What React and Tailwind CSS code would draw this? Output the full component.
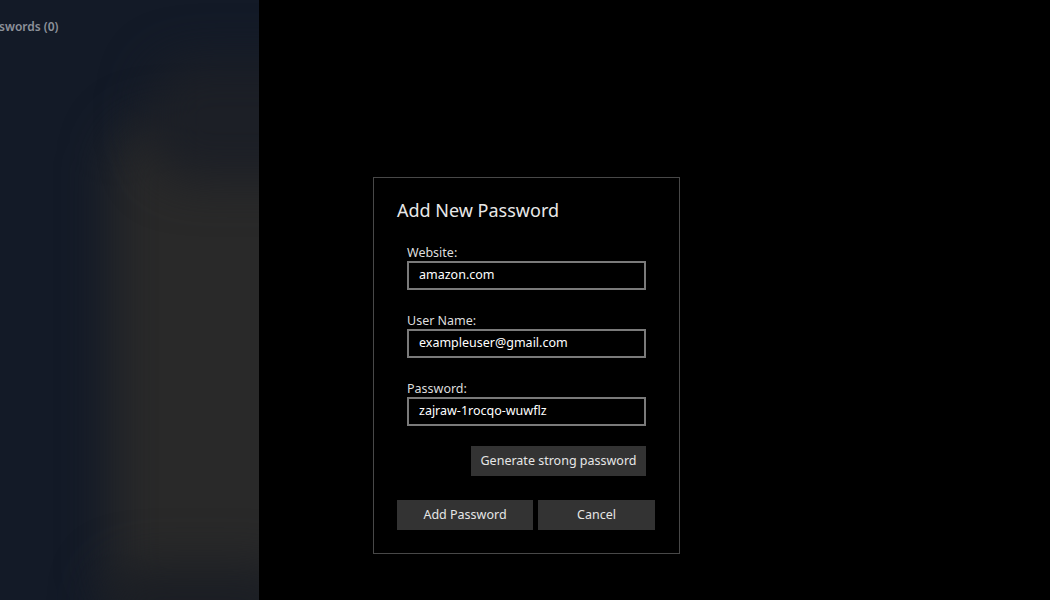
import React from "react";

const font = { fontFamily: '"Noto Sans", "Open Sans", sans-serif' };

function Field({ label, value }) {
  return (
    <div className="flex flex-col">
      <div className="h-[17px] text-[12.5px] leading-[17px] text-[#dedede]">{label}</div>
      <div className="h-[29px] w-[239px] border-2 border-[#7a7a7a] pl-[10px] flex items-center text-[12.5px] text-white">
        {value}
      </div>
    </div>
  );
}

export default function App() {
  return (
    <div className="relative w-[1050px] h-[600px] flex bg-black overflow-hidden" style={font}>
      <div className="relative w-[259px] h-full bg-[#131a27] overflow-hidden">
        <div className="absolute left-[110px] top-[120px] w-[260px] h-[500px] rounded-[50px] bg-[#292929] blur-xl" />
        <div className="absolute left-[150px] top-[60px] w-[200px] h-[120px] rounded-[40px] bg-[#1c1f26] blur-xl" />
        <div className="absolute left-[100px] top-[565px] w-[200px] h-[80px] rounded-[40px] bg-[#1b1e24] blur-xl" />
        <div className="relative pt-[18px] -ml-[1px] text-[12px] font-semibold text-[#8d919a]">swords (0)</div>
      </div>
      <div className="flex-1 h-full bg-black" />
      <div className="absolute inset-0 pl-[373px] pt-[177px]">
        <div className="w-[307px] h-[377px] border border-[#484848] bg-black pl-[23px] pt-[19px] flex flex-col">
          <div className="text-[18px] leading-[26px] text-[#e8e8e8]">Add New Password</div>
          <div className="pl-[10px] pt-[21px] flex flex-col gap-[22px]">
            <Field label="Website:" value="amazon.com" />
            <Field label="User Name:" value="exampleuser@gmail.com" />
            <Field label="Password:" value="zajraw-1rocqo-wuwflz" />
          </div>
          <div className="w-[249px] flex justify-end pt-[20px]">
            <div className="h-[30px] w-[175px] bg-[#333333] flex items-center justify-center text-[12.5px] text-[#e6e6e6]">
              Generate strong password
            </div>
          </div>
          <div className="flex gap-[5px] pt-[24px]">
            <div className="w-[136px] h-[30px] bg-[#333333] flex items-center justify-center text-[12.5px] text-[#e6e6e6]">
              Add Password
            </div>
            <div className="w-[117px] h-[30px] bg-[#333333] flex items-center justify-center text-[12.5px] text-[#e6e6e6]">
              Cancel
            </div>
          </div>
        </div>
      </div>
    </div>
  );
}
